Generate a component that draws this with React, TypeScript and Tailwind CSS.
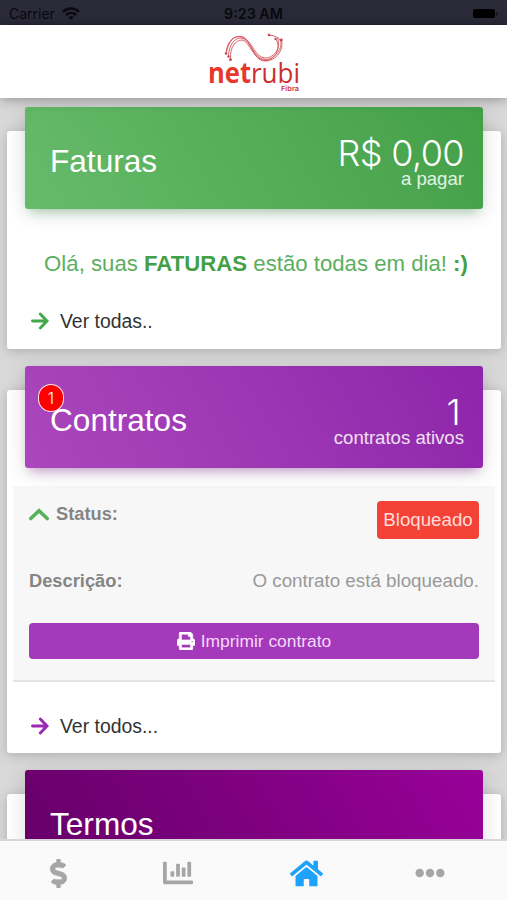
import type { ReactNode } from 'react'
import clsx from 'clsx'
import { FaChartBar, FaDollarSign, FaEllipsisH, FaHome, FaPrint } from 'react-icons/fa'

interface CardProps {
  title: string
  value?: string
  caption?: string
  badge?: string
  headerClass: string
  valueClass?: string
  className?: string
  children?: ReactNode
}

// Card with a coloured header that sticks out at the top
function Card({ title, value, caption, badge, headerClass, valueClass, className, children }: CardProps) {
  return (
    <section
      className={clsx(
        'ml-[7px] mr-[6px] flex shrink-0 flex-col rounded-[3px] bg-white',
        'shadow-[0_2px_12px_rgba(0,0,0,0.2)]',
        className
      )}
    >
      <header
        className={clsx(
          'relative mx-[18px] -mt-6 flex h-[102px] shrink-0 items-center justify-between rounded-[3px] pl-[25px] pr-[19px] text-white',
          headerClass
        )}
      >
        {badge && (
          <span className="absolute left-[13px] top-[18px] z-10 flex h-[28px] w-[26px] items-center justify-center rounded-full border-[1.5px] border-white/90 bg-[#ff0000] font-['Inter'] text-[16px] font-light">
            {badge}
          </span>
        )}
        <h2 className="mt-[5px] text-[31.6px] leading-9">{title}</h2>
        {value && (
          <div className="flex flex-col items-end pt-[7px]">
            <span
              className={clsx(
                "font-['Inter'] text-[36px] font-[270] leading-[34px] tracking-[-0.6px]",
                valueClass
              )}
            >
              {value}
            </span>
            <span className="text-[18.6px] leading-[18px] text-white/85">{caption}</span>
          </div>
        )}
      </header>
      {children}
    </section>
  )
}

function ArrowLink({ label, color }: { label: string; color: string }) {
  return (
    <a className="flex items-center gap-[11px] pl-6 text-[19.4px] leading-6 text-[#333]">
      <svg width="18" height="18" viewBox="0 0 18 18" className={clsx('shrink-0', color)}>
        <path d="M1.5 9H15.5M9.3 2L16 9L9.3 16" fill="none" stroke="currentColor" strokeWidth="2.9" strokeLinecap="round" />
      </svg>
      <span>{label}</span>
    </a>
  )
}

function WifiIcon() {
  return (
    <svg width="18" height="13" viewBox="0 0 18 13" fill="none" stroke="currentColor" strokeWidth="2.5">
      <path d="M1 4.9C5.6 0.4 12.4 0.4 17 4.9" />
      <path d="M4 8.1C6.9 5.3 11.1 5.3 14 8.1" />
      <path d="M9 12.8L6.4 10.2C7.9 8.9 10.1 8.9 11.6 10.2Z" fill="currentColor" stroke="none" />
    </svg>
  )
}

function Logo() {
  return (
    <svg width="92" height="62" viewBox="0 0 92 62">
      <g fill="none" stroke="#d4525a" strokeWidth="0.9">
        <path d="M18 21C19 10 25 4 32 4.3C44 5 44 29 57 29C68 29 76 18 73.5 8" />
        <path d="M20.5 24C21 12 27 6 33 6C43 7 45 27 57 27.5C67 28 76 15 72 8Q70 4 61 3" />
        <path d="M22.5 27C22 14 28 8 34 8C42 9 45 29 58 28.5C67 28 74 15 67.5 7" />
        <path d="M18.5 20C21 8 27 3 34 5C45 9 46 25 57 26C67 26 74 14 69 6" />
      </g>
      <g fill="#c84450">
        <circle cx="18" cy="21.5" r="1.3" />
        <circle cx="20.5" cy="24.5" r="1.2" />
        <circle cx="22.5" cy="27.7" r="1.4" />
        <circle cx="61" cy="3" r="1.3" />
        <circle cx="67.5" cy="7" r="1.2" />
        <circle cx="73.3" cy="8" r="1.4" />
      </g>
      <text x="0" y="51" fontFamily="Open Sans" fontWeight="700" fontSize="28" textLength="43" lengthAdjust="spacingAndGlyphs" fill="#e5392e">net</text>
      <text x="43" y="51" fontFamily="Open Sans" fontWeight="400" fontSize="27" textLength="49" lengthAdjust="spacingAndGlyphs" fill="#c9302f">rubi</text>
      <text x="73" y="58.5" fontFamily="Inter" fontWeight="600" fontSize="6.5" textLength="18" lengthAdjust="spacingAndGlyphs" fill="#d2322f">Fibra</text>
    </svg>
  )
}

export default function App() {
  return (
    <div className="flex h-[900px] w-[507px] flex-col overflow-hidden bg-[#d8d8d8] font-['Liberation_Sans',sans-serif]">
      {/* Status bar */}
      <div className="grid h-[25px] shrink-0 grid-cols-3 items-center bg-[#2a2a39] pl-[9px] pr-[9px] pt-[2px] text-[#09090e]">
        <div className="flex items-center gap-[7px] font-['Inter'] text-[14px]">
          <span>Carrier</span>
          <WifiIcon />
        </div>
        <span className="text-center font-['Inter'] text-[14.3px] font-semibold">9:23 AM</span>
        <div className="flex items-center justify-end gap-px">
          <span className="h-[9px] w-[22px] rounded-[2px] bg-black" />
          <span className="h-1 w-[2px] rounded-r bg-[#191922]" />
        </div>
      </div>

      {/* App header */}
      <div className="relative z-10 flex h-[73px] shrink-0 justify-center bg-white pt-[7px] shadow-[0_1px_12px_rgba(0,0,0,0.35)]">
        <Logo />
      </div>

      <main className="flex min-h-0 flex-1 flex-col overflow-hidden pt-[33px]">
        <Card
          title="Faturas"
          value="R$ 0,00"
          caption="a pagar"
          className="h-[218px]"
          headerClass="bg-linear-60 from-[#66bb6a] to-[#43a047] shadow-[0_4px_20px_rgba(0,0,0,0.14),0_7px_10px_-5px_rgba(76,175,80,0.4)]"
        >
          <p className="mt-[41px] pl-1 text-center text-[22.2px] leading-7 whitespace-nowrap text-[#5cae60]">
            Olá, suas <b className="text-[#43a047]">FATURAS</b> estão todas em dia! <b className="text-[#43a047]">:)</b>
          </p>
          <div className="mt-[31px]">
            <ArrowLink label="Ver todas.." color="text-[#43a84a]" />
          </div>
        </Card>

        <Card
          title="Contratos"
          value="1"
          caption="contratos ativos"
          badge="1"
          className="mt-[41px] h-[363px]"
          headerClass="bg-linear-60 from-[#ab47bc] to-[#8e24aa] shadow-[0_4px_20px_rgba(0,0,0,0.14),0_7px_10px_-5px_rgba(156,39,176,0.4)]"
          valueClass="pr-1"
        >
          <div className="mx-[6px] mt-[18px] flex h-[196px] shrink-0 flex-col border-b-2 border-[#e4e4e4] bg-[#f7f7f7] px-4 text-[18.3px] text-[#999]">
            <div className="flex items-start justify-between pt-[15px]">
              <div className="flex items-center gap-[7px] pt-px leading-6">
                <svg width="20" height="14" viewBox="0 0 20 14" className="text-[#54b35a]">
                  <path d="M1.8 11.5L10 3.8L18.2 11.5" fill="none" stroke="currentColor" strokeWidth="3.6" strokeLinecap="round" />
                </svg>
                <b className="text-[#858585]">Status:</b>
              </div>
              <span className="flex h-[38px] w-[102px] items-center justify-center rounded bg-[#f44336] text-[18.7px] text-[#ffdcd9]">
                Bloqueado
              </span>
            </div>
            <div className="mt-[30px] flex justify-between leading-6">
              <b className="text-[#858585]">Descrição:</b>
              <span className="text-[18.8px]">O contrato está bloqueado.</span>
            </div>
            <button className="mt-[30px] flex h-[36px] shrink-0 items-center justify-center gap-[6px] rounded bg-[#a439bb] text-[17.4px] text-[#f4daf8]">
              <FaPrint size={18} strokeWidth={16} className="text-white" />
              Imprimir contrato
            </button>
          </div>
          <div className="mt-[32px]">
            <ArrowLink label="Ver todos..." color="text-[#9c27b0]" />
          </div>
        </Card>

        <Card
          title="Termos"
          className="mt-[41px] h-[220px]"
          headerClass="bg-linear-60 from-[#650068] to-[#990099] shadow-[0_4px_20px_rgba(0,0,0,0.14)]"
        />
      </main>

      {/* Tab bar */}
      <nav className="flex h-[61px] shrink-0 items-center border-t-2 border-[#d9d5da] bg-[#fafafa] text-[#a6a6a6]">
        <span className="flex w-[116px] justify-center pt-[5px]">
          <FaDollarSign size={29} strokeWidth={14} />
        </span>
        <span className="flex w-[123px] justify-center pt-[4px]">
          <FaChartBar size={30} />
        </span>
        <span className="flex w-[135px] justify-center pt-[5px] text-[#1fa2fb]">
          <FaHome size={33} />
        </span>
        <span className="flex w-[112px] justify-center pt-[5px]">
          <FaEllipsisH size={30} />
        </span>
      </nav>
    </div>
  )
}
